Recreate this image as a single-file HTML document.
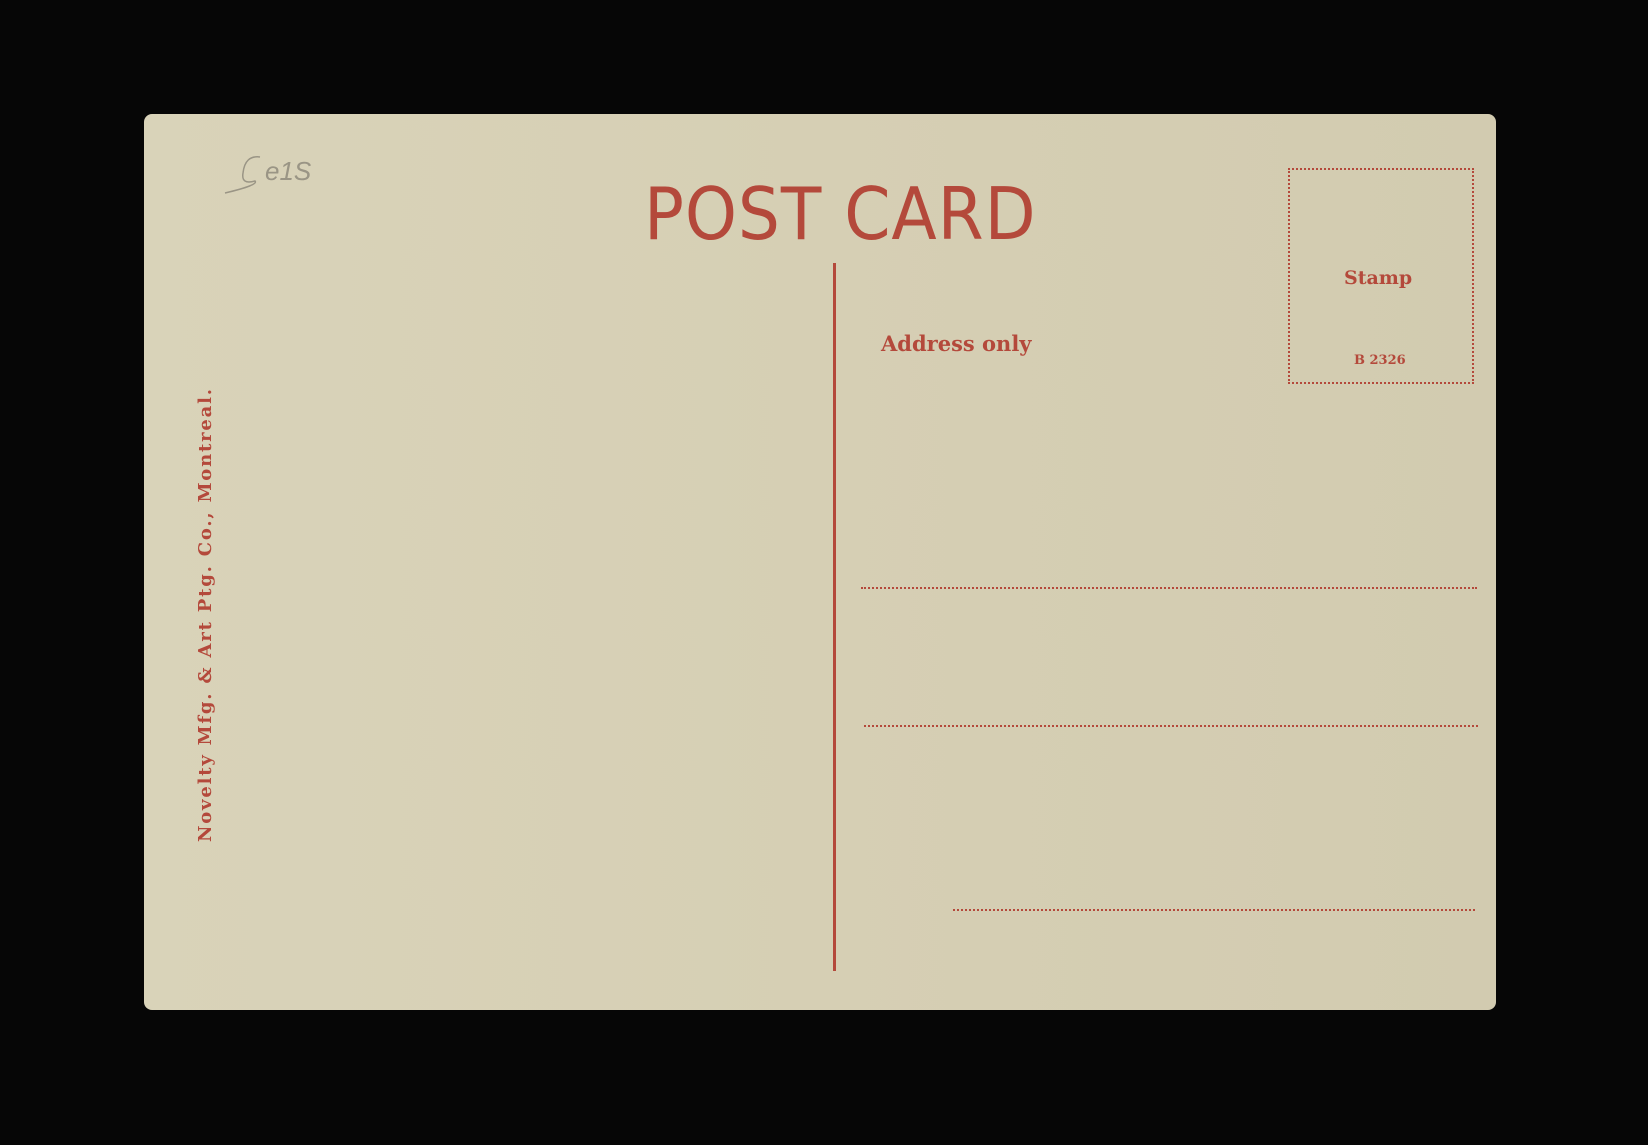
<!DOCTYPE html>
<html><head><meta charset="utf-8"><style>
html,body{margin:0;padding:0;width:1648px;height:1145px;background:#060606;overflow:hidden;position:relative}
.card{position:absolute;left:144px;top:114px;width:1352px;height:896px;background:linear-gradient(90deg,#d9d3b9,#d6cfb4 50%,#d2cbb0);border-radius:8px}
.t{position:absolute;font-family:"DejaVu Serif","Liberation Serif",serif;font-weight:bold;color:#b4493b;white-space:nowrap;line-height:1}
.dl{position:absolute;height:0;border-top:2px dotted #b4493b}
</style></head><body>
<div class="card"></div>
<div style="position:absolute;left:644px;top:178px;font-family:'DejaVu Sans','Liberation Sans',sans-serif;font-size:72px;color:#b4493b;letter-spacing:1px;transform:scaleX(0.92);transform-origin:left top;line-height:1">POST CARD</div>
<div style="position:absolute;left:833px;top:263px;width:3px;height:708px;background:#b4493b"></div>
<div class="t" style="left:881px;top:333px;font-size:21px">Address only</div>
<div style="position:absolute;left:1288px;top:168px;width:182px;height:212px;border:2px dotted #b4493b"></div>
<div class="t" style="left:1344px;top:269px;font-size:19px">Stamp</div>
<div class="t" style="left:1354px;top:354px;font-size:13px">B 2326</div>
<div class="dl" style="left:861px;top:587px;width:616px"></div>
<div class="dl" style="left:864px;top:725px;width:614px"></div>
<div class="dl" style="left:953px;top:909px;width:522px"></div>
<div class="t" style="left:197px;top:842px;font-size:18px;letter-spacing:1.8px;transform:rotate(-90deg);transform-origin:left top;">Novelty Mfg. &amp; Art Ptg. Co., Montreal.</div>
<svg style="position:absolute;left:215px;top:145px" width="150" height="60"><path d="M45 12 Q30 10 28 28 Q26 40 40 36 Q44 40 10 48" fill="none" stroke="#9a9585" stroke-width="1.5"/><text x="50" y="35" font-family="Liberation Sans,sans-serif" font-size="26" fill="#9a9585" font-style="italic">e1S</text></svg>
</body></html>
